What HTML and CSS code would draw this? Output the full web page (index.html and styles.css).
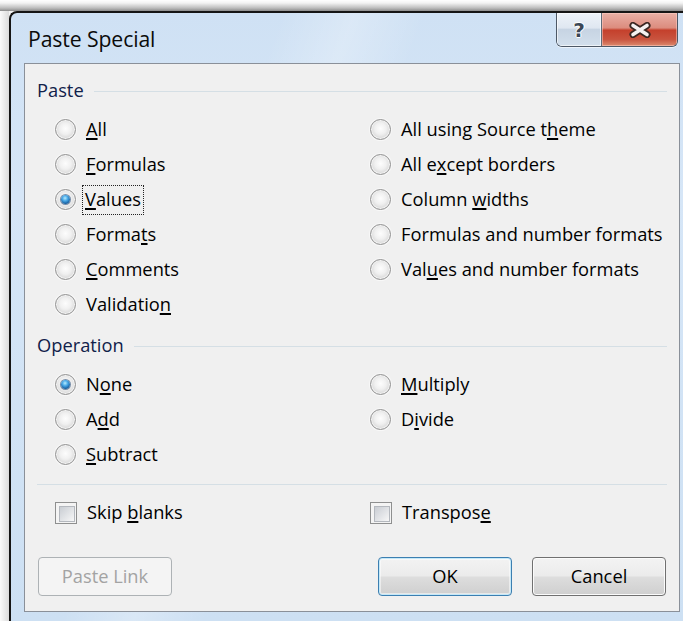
FILE: index.html
```html
<!DOCTYPE html>
<html lang="en">
<head>
<meta charset="utf-8">
<title>Paste Special</title>
<link rel="stylesheet" href="styles.css">
</head>
<body>
<div class="desktop">
  <div class="window">
    <div class="titlebar">
      <span class="title">Paste Special</span>
      <div class="caption-buttons">
        <span class="cap-btn help"><span class="help-glyph">?</span></span>
        <span class="cap-btn close">
          <svg width="26" height="16" viewBox="0 0 26 16" aria-hidden="true">
            <path d="M6 3.5 L20 12.5 M20 3.5 L6 12.5" stroke="#3a2622" stroke-width="7" stroke-linecap="round"/>
            <path d="M6 3.5 L20 12.5 M20 3.5 L6 12.5" stroke="#f4f1f1" stroke-width="3.6" stroke-linecap="round"/>
          </svg>
        </span>
      </div>
    </div>

    <div class="client">
      <div class="group-head"><span class="group-label">Paste</span><span class="group-line"></span></div>
      <div class="options">
        <label class="opt"><span class="radio"></span><span class="txt"><u>A</u>ll</span></label>
        <label class="opt"><span class="radio"></span><span class="txt">All using Source t<u>h</u>eme</span></label>
        <label class="opt"><span class="radio"></span><span class="txt"><u>F</u>ormulas</span></label>
        <label class="opt"><span class="radio"></span><span class="txt">All e<u>x</u>cept borders</span></label>
        <label class="opt"><span class="radio on"></span><span class="txt focus"><u>V</u>alues</span></label>
        <label class="opt"><span class="radio"></span><span class="txt">Column <u>w</u>idths</span></label>
        <label class="opt"><span class="radio"></span><span class="txt">Forma<u>t</u>s</span></label>
        <label class="opt"><span class="radio"></span><span class="txt">Formulas and number formats</span></label>
        <label class="opt"><span class="radio"></span><span class="txt"><u>C</u>omments</span></label>
        <label class="opt"><span class="radio"></span><span class="txt">Val<u>u</u>es and number formats</span></label>
        <label class="opt"><span class="radio"></span><span class="txt">Validatio<u>n</u></span></label>
      </div>

      <div class="group-head op-head"><span class="group-label">Operation</span><span class="group-line"></span></div>
      <div class="options">
        <label class="opt"><span class="radio on"></span><span class="txt">N<u>o</u>ne</span></label>
        <label class="opt"><span class="radio"></span><span class="txt"><u>M</u>ultiply</span></label>
        <label class="opt"><span class="radio"></span><span class="txt">A<u>d</u>d</span></label>
        <label class="opt"><span class="radio"></span><span class="txt">D<u>i</u>vide</span></label>
        <label class="opt"><span class="radio"></span><span class="txt"><u>S</u>ubtract</span></label>
      </div>

      <div class="separator"></div>

      <div class="options checks">
        <label class="opt"><span class="check"></span><span class="txt">Skip <u>b</u>lanks</span></label>
        <label class="opt"><span class="check"></span><span class="txt">Transpos<u>e</u></span></label>
      </div>

      <div class="buttons">
        <span class="btn disabled">Paste Link</span>
        <span class="btn default">OK</span>
        <span class="btn cancel">Cancel</span>
      </div>
    </div>
  </div>
</div>
</body>
</html>
```

FILE: styles.css
```css
* { box-sizing: border-box; }

html, body {
  margin: 0;
  padding: 0;
}

body {
  width: 683px;
  height: 621px;
  overflow: hidden;
  background: #f4f4f4;
  font-family: "Open Sans", "Noto Sans", sans-serif;
  color: #000;
}

/* desktop strip with the window's drop shadow above it */
.desktop {
  height: 621px;
  padding: 11px 0 0 9px;
  background:
    linear-gradient(#ffffff 0px, #f3f3f3 3px, #bdbdbd 8px, #8c8c8c 11px) top left / 100% 11px no-repeat,
    linear-gradient(90deg, #fbfbfb, #dcdcdc) left / 9px 100% no-repeat,
    #f4f4f4;
}

.window {
  width: 684px;
  height: 610px;
  border-top: 2px solid #151515;
  border-left: 2px solid #151515;
  border-top-left-radius: 8px;
  padding: 0 13px;
  display: flex;
  flex-direction: column;
  background:
    linear-gradient(110deg, rgba(255,255,255,0) 30%, rgba(255,255,255,0.25) 38%, rgba(255,255,255,0) 46%),
    linear-gradient(180deg, #cfe1f4 0%, #d6e6f7 30%, #cde0f3 100%);
}

/* ---------- title bar ---------- */
.titlebar {
  height: 50px;
  flex: none;
  display: flex;
  align-items: flex-start;
}

.title {
  margin: 13px 0 0 4px;
  font-size: 21.2px;
  line-height: 26px;
  color: #0b0b0b;
  letter-spacing: -0.1px;
}

.caption-buttons {
  margin-left: auto;
  margin-right: 2px;
  display: flex;
  height: 34px;
  border: 1px solid #4d5866;
  border-top: none;
  border-radius: 0 0 6px 6px;
  overflow: hidden;
  box-shadow: 0 1px 0 rgba(255,255,255,0.6);
}

.cap-btn {
  display: flex;
  align-items: center;
  justify-content: center;
  height: 100%;
}

.help {
  width: 45px;
  border-right: 1px solid #5f6b78;
  background: linear-gradient(180deg, #eef3f9 0%, #dfe7f1 45%, #c7d4e3 50%, #d2dfec 100%);
  box-shadow: inset 0 0 0 1px rgba(255,255,255,0.6);
}

.help-glyph {
  font-family: "DejaVu Sans", sans-serif;
  font-weight: bold;
  font-size: 20px;
  line-height: 1;
  color: #3b4756;
  text-shadow: 0 0 1px #fff, 1px 0 0 #fff, -1px 0 0 #fff, 0 1px 0 #fff, 0 -1px 0 #fff;
}

.close {
  width: 75px;
  background: linear-gradient(180deg, #e9b0a6 0%, #dc8c7e 45%, #c4402c 52%, #c9543f 80%, #dc8a6e 100%);
  box-shadow: inset 0 0 0 1px rgba(255,210,200,0.5);
}

/* ---------- client area ---------- */
.client {
  height: 549px;
  flex: none;
  border: 1px solid #8a9099;
  background: #f0f0f0;
  padding: 0 12px;
  font-size: 18.3px;
}

.group-head {
  display: flex;
  align-items: center;
  height: 22px;
  margin-top: 16px;
}

.op-head { margin-top: 13px; }

.group-label {
  color: #10214a;
  line-height: 22px;
  padding-bottom: 2px;
}

.group-line {
  flex: 1;
  height: 1px;
  margin-left: 10px;
  background: #d5dfe5;
}

.options {
  display: grid;
  grid-template-columns: 315px 1fr;
  grid-auto-rows: 35px;
  margin: 10px 0 0 18px;
}

.opt {
  display: flex;
  align-items: center;
}

.txt {
  margin-left: 10px;
  line-height: 24px;
  padding-bottom: 2px;
  white-space: nowrap;
}

.txt u {
  text-decoration-thickness: 1.5px;
  text-underline-offset: 2px;
}

.focus {
  margin-left: 7px;
  padding: 1px 2px 3px;
  outline: 1px dotted #222;
  outline-offset: 0;
}

.radio {
  width: 21px;
  height: 21px;
  flex: none;
  border-radius: 50%;
  border: 1px solid #939393;
  background: radial-gradient(circle at 50% 45%, #fdfdfd 0%, #f0f0f0 40%, #d2d2d2 80%, #c6c6c6 100%);
  box-shadow: inset 0 0 0 1px #f3f3f3, 0 0 0 1px rgba(255,255,255,0.5);
  display: flex;
  align-items: center;
  justify-content: center;
}

.radio.on::after {
  content: "";
  width: 9px;
  height: 9px;
  border-radius: 50%;
  background: radial-gradient(circle at 45% 35%, #b6ecff 0%, #49a8e6 35%, #11589a 75%, #0b3a6a 100%);
  box-shadow: 0 0 0 1px rgba(20,60,110,0.55);
}

.separator {
  height: 1px;
  margin-top: 12px;
  background: #d5dfe5;
}

.checks { margin-top: 10px; }

.check {
  width: 22px;
  height: 22px;
  flex: none;
  border: 1px solid #8e8f8f;
  background: #f4f4f4;
  padding: 3px;
}

.check::before {
  content: "";
  display: block;
  width: 100%;
  height: 100%;
  border: 1px solid #b4b8be;
  background: linear-gradient(135deg, #c9cdd3 0%, #e2e4e7 55%, #f7f7f7 100%);
}

/* ---------- dialog buttons ---------- */
.buttons {
  display: flex;
  margin-top: 27px;
  padding: 0 1px;
}

.btn {
  width: 134px;
  height: 39px;
  display: flex;
  align-items: center;
  justify-content: center;
  border: 1px solid #707070;
  border-radius: 4px;
  background: linear-gradient(180deg, #f3f3f3 0%, #ebebeb 48%, #dddddd 52%, #cfcfcf 100%);
  box-shadow: inset 0 0 0 1px #fbfbfb;
  font-size: 18.3px;
  padding-bottom: 2px;
}

.btn.disabled {
  border-color: #adb2b5;
  background: #f4f4f4;
  box-shadow: none;
  color: #a3a3a3;
}

.btn.default {
  margin-left: auto;
  border-color: #3c7fb1;
  box-shadow: inset 0 0 0 1px #c4e8f8, inset 0 0 0 2px rgba(255,255,255,0.5);
}

.btn.cancel {
  margin-left: 20px;
}
```
